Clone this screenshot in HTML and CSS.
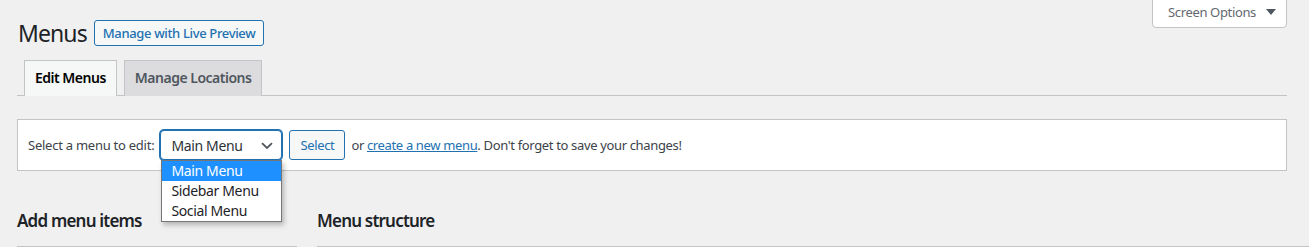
FILE: index.html
```html
<!DOCTYPE html>
<html lang="en">
<head>
<meta charset="utf-8">
<title>Menus</title>
<link rel="stylesheet" href="styles.css">
</head>
<body>
<div class="wrap">
  <div class="header">
    <div class="title-row">
      <h1 class="page-title">Menus</h1>
      <a class="title-action" href="#">Manage with Live Preview</a>
    </div>
    <button class="screen-options" type="button">Screen Options <span class="caret"></span></button>
  </div>

  <nav class="tabs">
    <a class="tab tab-active" href="#">Edit Menus</a>
    <a class="tab" href="#">Manage Locations</a>
  </nav>

  <div class="manage-menus">
    <span class="label">Select a menu to edit:</span>
    <div class="select-wrap">
      <div class="select">
        <span>Main Menu</span>
        <svg class="chevron" width="12" height="8" viewBox="0 0 12 8"><path d="M1 1.2 L6 6 L11 1.2" fill="none" stroke="#50575e" stroke-width="1.8"/></svg>
      </div>
      <ul class="listbox">
        <li class="option option-selected">Main Menu</li>
        <li class="option">Sidebar Menu</li>
        <li class="option">Social Menu</li>
      </ul>
    </div>
    <button class="btn" type="button">Select</button>
    <span class="hint">or <a href="#">create a new menu</a>. Don't forget to save your changes!</span>
  </div>

  <div class="columns">
    <div class="col col-left">
      <h2>Add menu items</h2>
      <div class="box"></div>
    </div>
    <div class="col col-right">
      <h2>Menu structure</h2>
      <div class="box"></div>
    </div>
  </div>
</div>
</body>
</html>
```

FILE: styles.css
```css
* { box-sizing: border-box; }

html, body {
  margin: 0;
  padding: 0;
  background: #f0f0f1;
  overflow: hidden;
}

body {
  font-family: "Noto Sans", "Open Sans", sans-serif;
  font-size: 13px;
  letter-spacing: -0.35px;
  color: #3c434a;
}

.wrap {
  margin: 0 22px 0 17px;
}

.header {
  display: flex;
  justify-content: space-between;
  align-items: flex-start;
}

.title-row {
  display: flex;
  align-items: center;
  gap: 7px;
  padding-top: 19px;
}

.page-title {
  margin: 0 0 0 1px;
  font-size: 23px;
  font-weight: 400;
  letter-spacing: -0.9px;
  line-height: 28px;
  color: #1d2327;
}

.title-action {
  display: inline-block;
  height: 26px;
  line-height: 24px;
  padding: 0 8px;
  border: 1px solid #2271b1;
  border-radius: 3px;
  background: #f6f7f7;
  color: #2271b1;
  font-size: 13px;
  font-weight: 500;
  text-decoration: none;
}

.screen-options {
  display: flex;
  align-items: center;
  gap: 10px;
  width: 135px;
  height: 29px;
  margin-top: -1px;
  padding: 0 0 4px 15px;
  border: 1px solid #c3c4c7;
  border-radius: 0 0 4px 4px;
  background: #fff;
  color: #646970;
  font-family: inherit;
  font-size: 13px;
  letter-spacing: -0.35px;
}

.caret {
  width: 0;
  height: 0;
  border-left: 5px solid transparent;
  border-right: 5px solid transparent;
  border-top: 6px solid #50575e;
  margin-top: 1px;
}

.tabs {
  display: flex;
  gap: 7px;
  margin-top: 13px;
  padding-left: 7px;
  border-bottom: 1px solid #c3c4c7;
  height: 36px;
}

.tab {
  display: block;
  height: 36px;
  padding: 0 10px;
  line-height: 34px;
  border: 1px solid #c3c4c7;
  border-bottom: none;
  background: #dcdcde;
  color: #50575e;
  font-size: 14px;
  font-weight: 600;
  letter-spacing: -0.5px;
  text-decoration: none;
}

.tab-active {
  background: #f6f7f7;
  color: #000;
  position: relative;
  z-index: 1;
}

.manage-menus {
  display: flex;
  align-items: center;
  margin-top: 23px;
  padding: 10px;
  border: 1px solid #c3c4c7;
  background: #fff;
  height: 52px;
}

.label {
  margin-right: 6px;
  letter-spacing: -0.25px;
}

.select-wrap {
  position: relative;
  width: 122px;
  height: 30px;
}

.select {
  display: flex;
  align-items: center;
  justify-content: space-between;
  height: 30px;
  padding: 0 8px 0 10px;
  border: 1px solid #2271b1;
  border-radius: 4px;
  box-shadow: 0 0 0 1px #2271b1;
  color: #2c3338;
  font-size: 14px;
  background: #fff;
}

.chevron { margin-top: 1px; }

.listbox {
  position: absolute;
  top: 30px;
  left: 1px;
  width: 121px;
  margin: 0;
  padding: 0;
  list-style: none;
  background: #fff;
  border: 1px solid #767676;
  box-shadow: 2px 3px 5px rgba(0, 0, 0, 0.25);
  z-index: 5;
}

.option {
  height: 20px;
  line-height: 20px;
  padding-left: 9px;
  color: #1d2327;
  font-size: 14px;
}

.option-selected {
  background: #1e90ff;
  color: #fff;
}

.btn {
  margin-left: 7px;
  height: 30px;
  padding: 0 10px;
  border: 1px solid #2271b1;
  border-radius: 3px;
  background: #f6f7f7;
  color: #2271b1;
  font-family: inherit;
  font-size: 13px;
  letter-spacing: -0.35px;
}

.hint { margin-left: 6px; }

.hint a { color: #2271b1; }

.columns {
  display: grid;
  grid-template-columns: 280px 1fr;
  gap: 20px;
  margin-right: -22px;
  margin-top: 36px;
}

.col h2 {
  margin: 0;
  font-size: 17px;
  font-weight: 600;
  letter-spacing: -0.8px;
  line-height: 28px;
  color: #1d2327;
}

.box {
  margin-top: 11px;
  border-top: 1px solid #c3c4c7;
  height: 20px;
}
```
